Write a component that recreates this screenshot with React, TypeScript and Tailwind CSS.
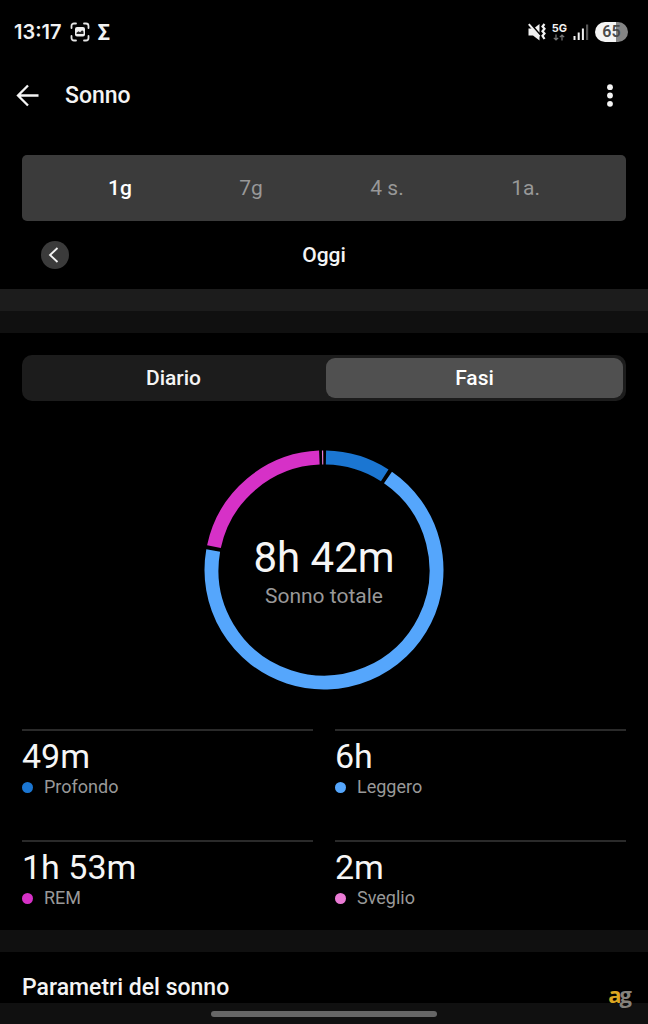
import React, { useState } from "react";

type Phase = {
  label: string;
  value: string;
  minutes: number;
  color: string;
  dot: string;
};

const phases: Phase[] = [
  { label: "Profondo", value: "49m", minutes: 49, color: "#1b76d2", dot: "bg-[#1b76d2]" },
  { label: "Leggero", value: "6h", minutes: 360, color: "#55a6fc", dot: "bg-[#55a6fc]" },
  { label: "REM", value: "1h 53m", minutes: 113, color: "#d631c7", dot: "bg-[#d631c7]" },
  { label: "Sveglio", value: "2m", minutes: 2, color: "#ea7bd5", dot: "bg-[#ea7bd5]" },
];

const ranges = ["1g", "7g", "4 s.", "1a."];
const views = ["Diario", "Fasi"];

function StatusBar() {
  return (
    <div className="flex h-16 items-center justify-between pl-[14px] pr-5 font-['Inter',sans-serif] text-[#f2f2f2]">
      <div className="flex items-center gap-2">
        <span className="text-[20px] leading-6 font-semibold">13:17</span>
        <svg width="20" height="20" viewBox="0 0 20 20" fill="none" aria-hidden="true">
          <path
            d="M1.5 6V4A2.5 2.5 0 0 1 4 1.5h2M14 1.5h2A2.5 2.5 0 0 1 18.5 4v2M18.5 14v2a2.5 2.5 0 0 1-2.5 2.5h-2M6 18.5H4A2.5 2.5 0 0 1 1.5 16v-2"
            stroke="#e4e4e4"
            strokeWidth="1.8"
            strokeLinecap="round"
          />
          <rect x="5" y="5" width="10" height="9.5" rx="2" fill="#eee" />
          <path d="M6.500 12v-1.200l2-1.600 1.600 1 2-2 1.400 1.400V12z" fill="#222" />
        </svg>
        <span className="pt-[2px] font-['Roboto',sans-serif] text-[22px] leading-6 font-bold">Σ</span>
      </div>

      <div className="flex items-center gap-[6px]">
        <svg width="18" height="18" viewBox="0 0 18 18" fill="none" aria-hidden="true">
          <path d="M.5 5.500H4L11.500 13.500V17.500L5 12.500H.5z" fill="#f2f2f2" />
          <path d="M.8 1.200 11.500 13.500" stroke="#f2f2f2" strokeWidth="2" />
          <path d="M11.500 1v8.800L7 4.600z" fill="#f2f2f2" />
          <path
            d="M16.500 1 14.500 3.500l2 2.300-2 2.400 2 2.300-2 2.300 2 3.200"
            stroke="#f2f2f2"
            strokeWidth="2.200"
          />
        </svg>
        <div className="flex flex-col items-center">
          <span className="text-[11px] leading-[11px] font-bold">5G</span>
          <svg width="12" height="7" viewBox="0 0 12 7" fill="none" aria-hidden="true">
            <path d="M3 .5V6M.8 3.800 3 6l2.200-2.200M9 6.500V1M6.800 3.200 9 1l2.200 2.200" stroke="#777" strokeWidth="1.200" />
          </svg>
        </div>
        <svg width="16" height="17" viewBox="0 0 16 17" aria-hidden="true">
          <rect x="0.500" y="12" width="2" height="4" fill="#f2f2f2" />
          <rect x="4.700" y="8.500" width="2" height="7.500" fill="#f2f2f2" />
          <rect x="8.900" y="4.500" width="2" height="11.500" fill="#f2f2f2" />
          <rect x="13" y="0.500" width="2.200" height="15.500" fill="#555" />
        </svg>
        <div className="flex h-5 w-[33px] items-center justify-center rounded-full bg-linear-to-r from-[#f4f4f4] from-65% to-[#858585] to-65% font-['Roboto',sans-serif] text-[16px] leading-5 font-semibold text-[#4a4a4a]">
          65
        </div>
      </div>
    </div>
  );
}

function Header() {
  return (
    <header className="flex h-16 items-center pl-4 pr-[27px]">
      <button aria-label="Indietro">
        <svg width="24" height="24" viewBox="0 0 24 24" fill="none" stroke="#f4f4f4" strokeWidth="2.300">
          <path d="M22.500 11.500H3M12 1.500l-10 10 10 10" />
        </svg>
      </button>
      <h1 className="ml-[25px] text-[23px] leading-8 font-medium">Sonno</h1>
      <button aria-label="Altro" className="ml-auto">
        <svg width="22" height="24" viewBox="0 0 22 24" fill="#f4f4f4">
          <circle cx="11" cy="3.200" r="2.900" />
          <circle cx="11" cy="11.500" r="2.900" />
          <circle cx="11" cy="19.800" r="2.900" />
        </svg>
      </button>
    </header>
  );
}

// Donut chart
const CENTER = 120;
const RADIUS = 112.5;
const GAP = 1;

function point(deg: number) {
  const rad = ((deg - 90) * Math.PI) / 180;
  return `${CENTER + RADIUS * Math.cos(rad)} ${CENTER + RADIUS * Math.sin(rad)}`;
}

function SleepRing() {
  const total = phases.reduce((sum, p) => sum + p.minutes, 0);
  let angle = 0;

  const arcs = phases.map((p) => {
    const sweep = (p.minutes / total) * 360;
    // very short phases still get a thin line
    const pad = Math.min(GAP, (sweep - 0.6) / 2);
    const from = angle + pad;
    const to = angle + sweep - pad;
    angle += sweep;
    const large = to - from > 180 ? 1 : 0;
    return (
      <path
        key={p.label}
        d={`M${point(from)} A${RADIUS} ${RADIUS} 0 ${large} 1 ${point(to)}`}
        stroke={p.color}
        strokeWidth="14"
      />
    );
  });

  return (
    <div className="mt-[49px] grid place-items-center">
      <svg className="col-start-1 row-start-1" width="240" height="240" viewBox="0 0 240 240" fill="none" aria-hidden="true">
        {arcs}
      </svg>
      <div className="col-start-1 row-start-1 pt-1 text-center">
        <p className="text-[42px] leading-[48px] text-[#f6f6f6]">8h 42m</p>
        <p className="text-[21px] leading-7 text-[#999]">Sonno totale</p>
      </div>
    </div>
  );
}

export default function App() {
  const [range, setRange] = useState("1g");
  const [view, setView] = useState("Fasi");

  return (
    <div className="flex min-h-screen flex-col bg-black font-['Roboto',sans-serif] text-[#f4f4f4]">
      <StatusBar />
      <Header />

      {/* Period */}
      <div className="px-[22px] pt-[27px]">
        <div className="flex h-[66px] items-center justify-between rounded-[5px] bg-[#3b3b3b] px-[86px]">
          {ranges.map((r) => (
            <button
              key={r}
              onClick={() => setRange(r)}
              className={
                r === range
                  ? "text-[21px] leading-7 font-medium text-white"
                  : "text-[21px] leading-7 text-[#989898]"
              }
            >
              {r}
            </button>
          ))}
        </div>
        <div className="grid h-[68px] grid-cols-[28px_1fr_28px] items-center px-[19px]">
          <button aria-label="Giorno precedente" className="flex size-7 items-center justify-center rounded-full bg-[#3b3b3b]">
            <svg width="28" height="28" viewBox="0 0 28 28" fill="none" stroke="#f4f4f4" strokeWidth="1.800">
              <path d="M16.500 7 9 14l7.500 7" />
            </svg>
          </button>
          <p className="text-center text-[21px] leading-7 font-medium">Oggi</p>
        </div>
      </div>

      <div className="h-[22px] bg-[#1c1c1c]" />
      <div className="h-[22px] bg-[#101010]" />

      <main className="px-[22px] pt-[22px] pb-[19px]">
        <div className="grid h-[46px] grid-cols-2 gap-1 rounded-[10px] bg-[#1c1c1c] p-[3px]">
          {views.map((v) => (
            <button
              key={v}
              onClick={() => setView(v)}
              className={
                v === view
                  ? "rounded-[9px] bg-[#505050] text-[21px] leading-7 font-medium text-white"
                  : "rounded-[9px] text-[21px] leading-7 font-medium"
              }
            >
              {v}
            </button>
          ))}
        </div>

        <SleepRing />

        <dl className="mt-[39px] grid grid-cols-2 gap-x-[22px] gap-y-10">
          {phases.map((p) => (
            <div key={p.label} className="flex flex-col-reverse border-t-2 border-[#2a2a2a] pt-[7px]">
              <dt className="flex items-center gap-[11px] text-[18px] leading-[26px] text-[#999]">
                <span className={`size-[11px] rounded-full ${p.dot}`} />
                {p.label}
              </dt>
              <dd className="text-[34px] leading-9 text-[#f6f6f6]">{p.value}</dd>
            </div>
          ))}
        </dl>
      </main>

      <div className="h-[22px] bg-[#101010]" />

      <h2 className="px-[22px] pt-[22px] pb-px text-[23px] leading-7 font-medium">Parametri del sonno</h2>

      <div className="relative mt-auto flex h-[21px] items-center justify-center bg-[#101010]">
        <div className="h-[6px] w-[35%] rounded-full bg-[#666]" />
        <div className="absolute right-4 bottom-4 flex font-['Open_Sans',sans-serif] text-[22px] leading-7 font-bold">
          <span className="text-[#dba622]">a</span>
          <span className="-ml-[2px] text-[#85827c]">g</span>
        </div>
      </div>
    </div>
  );
}
